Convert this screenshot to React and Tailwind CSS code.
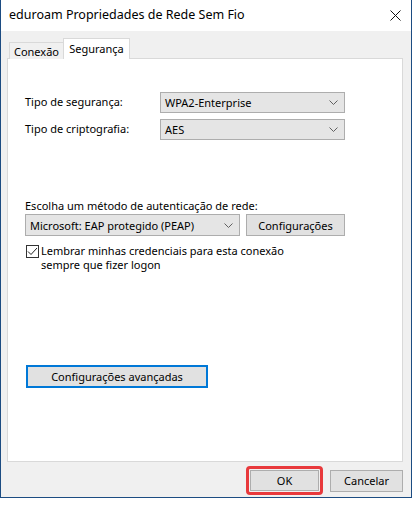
import { useState } from 'react'

const font = { fontFamily: '"Noto Sans", "Open Sans", sans-serif' }

function Chevron() {
  return (
    <svg width="9" height="5" viewBox="0 0 9 5" className="shrink-0">
      <path d="M0.5 0.5 L4.5 4.5 L8.5 0.5" fill="none" stroke="#606060" strokeWidth="1" />
    </svg>
  )
}

function Combo({ value, className }) {
  return (
    <div className={`flex items-center justify-between bg-[#e5e5e5] border border-[#adadad] pl-[4px] pr-[6px] ${className}`}>
      <span className="leading-none">{value}</span>
      <Chevron />
    </div>
  )
}

function Button({ children, className }) {
  return (
    <button className={`flex items-center justify-center bg-[#e1e1e1] border border-[#adadad] leading-none ${className}`}>
      {children}
    </button>
  )
}

export default function App() {
  const [remember, setRemember] = useState(true)

  return (
    <div className="w-[416px] h-[506px] bg-white text-[11px] text-black" style={font}>
      <div className="w-[412px] h-[498px] flex flex-col border-l border-r border-b border-[#1c4c82]">
        {/* title bar */}
        <div className="h-[31px] bg-white flex items-center justify-between pl-[8px] pr-[10px] shrink-0">
          <span className="text-[12.5px] leading-none">eduroam Propriedades de Rede Sem Fio</span>
          <svg width="11" height="11" viewBox="0 0 11 11">
            <path d="M0.5 0.5 L10.5 10.5 M10.5 0.5 L0.5 10.5" stroke="#111" strokeWidth="1" />
          </svg>
        </div>

        <div className="flex-1 bg-[#f0f0f0] flex flex-col">
          {/* tabs */}
          <div className="flex items-end pl-[8px] pt-[7px] -mb-px relative z-10">
            <div className="h-[17px] w-[54px] border border-r-0 border-b-0 border-[#d9d9d9] bg-[#f0f0f0] flex items-center justify-center pt-[1px] leading-none">
              Conexão
            </div>
            <div className="h-[21px] w-[67px] border border-b-0 border-[#d9d9d9] bg-white flex items-center justify-center pb-[2px] leading-none">
              Segurança
            </div>
          </div>

          {/* panel */}
          <div className="ml-[6px] w-[396px] h-[404px] border border-[#d9d9d9] bg-white flex flex-col pl-[17px]">
            <div className="flex items-center mt-[33px] h-[21px]">
              <span className="w-[135px]">Tipo de segurança:</span>
              <Combo value="WPA2-Enterprise" className="w-[185px] h-[21px]" />
            </div>
            <div className="flex items-center mt-[6px] h-[21px]">
              <span className="w-[135px]">Tipo de criptografia:</span>
              <Combo value="AES" className="w-[185px] h-[21px]" />
            </div>

            <div className="mt-[58px] leading-[15px]">Escolha um método de autenticação de rede:</div>
            <div className="flex mt-[1px] gap-[6px]">
              <Combo value="Microsoft: EAP protegido (PEAP)" className="w-[215px] h-[22px]" />
              <Button className="w-[99px] h-[22px]">Configurações</Button>
            </div>

            <label className="flex items-start mt-[9px] ml-[1px] gap-[2px] cursor-default">
              <span
                onClick={() => setRemember(!remember)}
                className="w-[13px] h-[13px] border border-[#333] bg-white flex items-center justify-center shrink-0"
              >
                {remember && (
                  <svg width="11" height="9" viewBox="0 0 11 9">
                    <path d="M1 4.5 L4 7.5 L10 1" fill="none" stroke="#222" strokeWidth="1" />
                  </svg>
                )}
              </span>
              <span className="flex flex-col -mt-[1px]">
                <span className="leading-[14px]">Lembrar minhas credenciais para esta conexão</span>
                <span className="leading-[14px]">sempre que fizer logon</span>
              </span>
            </label>

            <button className="mt-[93px] ml-[1px] w-[182px] h-[23px] bg-[#e1e1e1] border-2 border-[#0078d7] flex items-center justify-center leading-none">
              Configurações avançadas
            </button>
          </div>

          {/* footer */}
          <div className="flex justify-end items-center pr-[8px] mt-[4px] gap-[7px]">
            <div className="border-[3px] border-[#e8393c] rounded-[4px] p-px">
              <Button className="w-[69px] h-[21px]">OK</Button>
            </div>
            <Button className="w-[73px] h-[22px]">Cancelar</Button>
          </div>
        </div>
      </div>
    </div>
  )
}
